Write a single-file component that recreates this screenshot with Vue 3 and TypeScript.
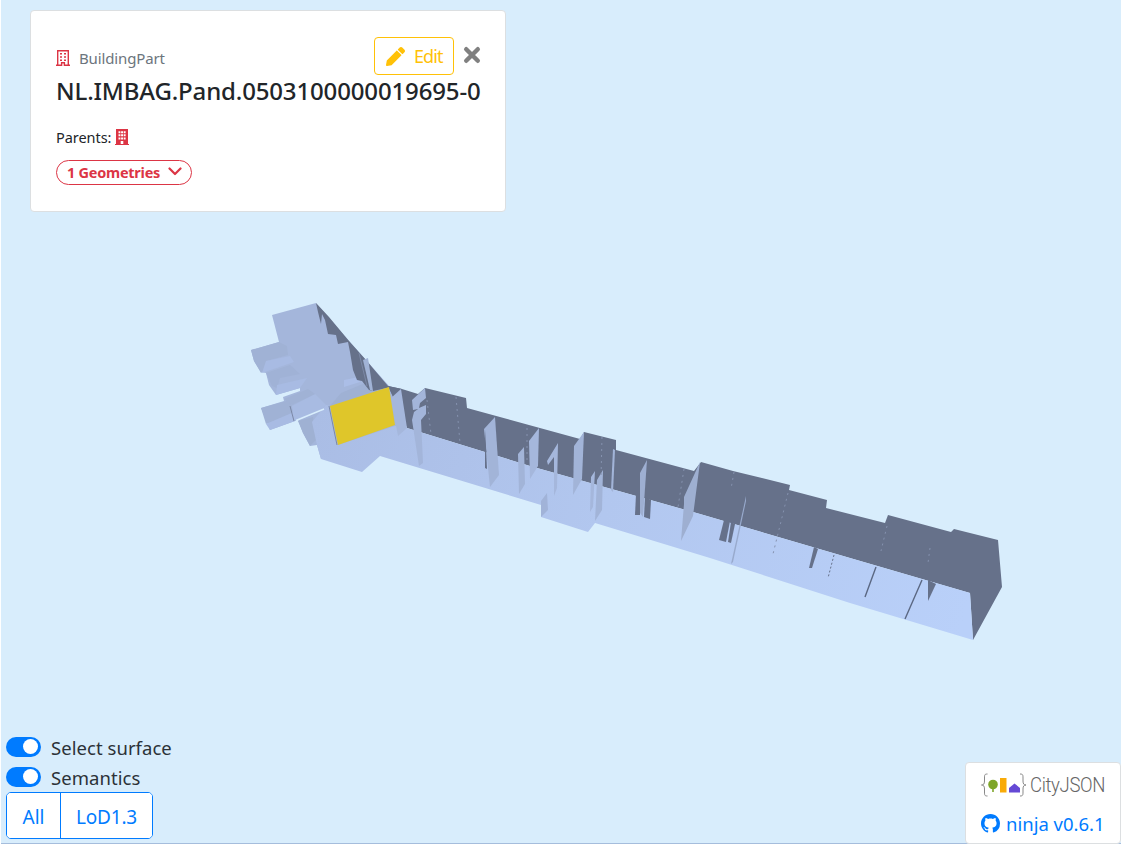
<script setup lang="ts">
import { ref } from 'vue'

interface Shape { points: string; fill: string }

const selectSurface = ref(true)
const semantics = ref(true)

const wall = '#66718a'
const pale = '#a4b6db'

const leftWing: Shape[] = [
  { points: '272,315 316,303 350,342 389,386 404,400 400,434 380,440 330,447 321,459 317,445 310,446 303,433 298,420 324,409 295,421 270,430 261,408 284,401 283,397 300,391 300,388 276,395 269,385 266,373 261,372 254,361 251,350 279,342', fill: pale },
  { points: '251,350 279,342 287,346 288,355 266,361 268,367 261,373 254,361', fill: '#a0b2d5' },
  { points: '266,361 290,356 294,362 262,373', fill: '#a8bbe3' },
  { points: '266,373 290,365 300,374 280,378 277,388 272,386', fill: '#a0b2d6' },
  { points: '277,385 307,378 300,388 276,395', fill: '#a8bbe3' },
  { points: '261,408 290,400 294,413 266,424', fill: '#a0b2d5' },
  { points: '266,424 294,412 295,421 270,430', fill: '#a8bbe3' },
  { points: '292,406 315,394 326,405 322,409 294,421', fill: '#a8bbe2' },
  { points: '284,399 308,389 315,394 292,405', fill: '#a0b2d5' },
  { points: '344,380 359,377 360,382 344,387', fill: '#abbee7' },
  { points: '330,406 341,393 370,381 390,388', fill: '#9fb1d4' },
  { points: '298,421 313,417 316,440 310,446 303,433', fill: '#9fb1d3' },
]

const backWalls: Shape[] = [
  { points: '316,303 329,317 349,341 366,360 388,386 399,390 397,394 394,398 391,387 373,391 369,390 362,381 357,380 353,370 350,352 348,342 338,344 336,335 328,334 325,320 322,314 321,324 318,312', fill: wall },
  { points: '388,386 402,389 418,394 425,388 466,398 467,408 580,439 584,432 616,440 616,450 694,471 701,462 733,471 790,485 789,490 827,500 826,508 885,523 888,515 951,532 954,529 998,540 1002,587 973,640 970,593 850,558 700,514 530,466 407,428', fill: wall },
]

const partitions: Shape[] = [
  { points: '388,386 402,389 394,398', fill: wall },
  { points: '391,398 401,389 407,428 398,436', fill: '#a5b7dc' },
  { points: '412,400 425,388 426,398 420,403 419,408 426,405 426,414 421,420 423,463 419,466 412,420 414,412 418,409 413,410', fill: '#a3b5da' },
  { points: '484,429 495,417 499,475 490,487', fill: '#a2b4d8' },
  { points: '518,454 524,447 525,484 519,494', fill: '#a2b4d8' },
  { points: '529,441 539,428 538,466 530,479', fill: '#a5b7dc' },
  { points: '547,461 558,443 557,488 554,496 554,457 548,465', fill: '#a5b7dc' },
  { points: '574,446 584,432 582,479 573,495', fill: '#a2b4d8' },
  { points: '591,477 595,471 593,507 590,512', fill: '#a5b7dc' },
  { points: '597,480 603,470 602,510 595,521', fill: '#a2b4d8' },
  { points: '613,449 615,450 613,492 611,490', fill: '#a2b4d8' },
  { points: '640,473 647,460 643,517 640,513', fill: '#9eafd2' },
  { points: '684,504 684,497 700,462 693,516 681,541', fill: '#9eafd1' },
  { points: '746,496 746,501 733,562 731,564', fill: '#98aacd' },
  { points: '541,501 547,493 548,510 541,517', fill: '#a1b3d8' },
  { points: '363,360 368,358 373,391 370,390', fill: '#a1b3d6' },
]

const columns: Shape[] = [
  { points: '636,494 640,495 640,515 635,515', fill: wall },
  { points: '645,497 651,500 650,519 644,517', fill: wall },
  { points: '724,520 730,521 726,542 719,540', fill: wall },
  { points: '731,522 735,524 731,543 728,542', fill: wall },
  { points: '814,547 818,549 812,568 809,568', fill: wall },
  { points: '928,580 936,584 928,601', fill: wall },
  { points: '485,430 486,447 487,469 485,468', fill: wall },
]
</script>

<template>
  <main class="viewer">
    <svg class="scene" viewBox="0 0 1121 844" aria-hidden="true">
      <defs>
        <linearGradient id="floor" gradientUnits="userSpaceOnUse" x1="320" y1="400" x2="970" y2="600">
          <stop offset="0" stop-color="#aabde5" />
          <stop offset=".45" stop-color="#b2c7ef" />
          <stop offset="1" stop-color="#b9d0f9" />
        </linearGradient>
      </defs>
      <polygon v-for="s in leftWing" :key="s.points" :points="s.points" :fill="s.fill" />
      <polygon v-for="s in backWalls" :key="s.points" :points="s.points" :fill="s.fill" />
      <path fill="url(#floor)" d="M338 445 395 426 407 428 530 466 700 514 850 558 970 593 973 640 850 603 710 558 595 523 588 532 541 517 541 505 380 456 362 472 321 459 317 445 312 422 326 405 330 406z" />
      <polygon v-for="s in partitions" :key="s.points" :points="s.points" :fill="s.fill" />
      <polygon v-for="s in columns" :key="s.points" :points="s.points" :fill="s.fill" />
      <path d="M330 406 389 387 395 425 338 445z" fill="#dfc62a" />
      <path d="M296 420.500 324 409" stroke="#d8edfc" stroke-width="1.6" />
      <path d="M329 406 337 445M290 406 294 421M359 353 367 386" stroke="#7b88a6" fill="none" />
      <path d="M876 567 865 597M922 580 905 619" stroke="#5b6883" stroke-width="1.4" />
      <path d="M427 400 431 434M456 397 460 443M527 428 527 462M602 437 601 478M684 469 678 507M734 472 731 489M788 493 773 554M887 526 881 551M930 548 928 563" stroke="#8592af" stroke-dasharray="2 4" fill="none" />
      <path d="M834 555 828 578" stroke="#66718a" stroke-dasharray="2 2" />
    </svg>
    <div class="edge"></div>

    <section class="card info">
      <div class="info-head">
        <div class="kind">
          <svg class="building" viewBox="0 0 14 16"><path fill="none" stroke="currentColor" stroke-width="1.4" d="M1.700 15V.8h10.600V15M0 15.200h5.600v-2.400h2.800v2.400H14" /><path fill="currentColor" d="M4 3h2v1.600H4zm4 0h2v1.600H8zM4 6.200h2v1.600H4zm4 0h2v1.600H8zM4 9.400h2V11H4zm4 0h2V11H8z" /></svg>
          <span class="kind-name">BuildingPart</span>
        </div>
        <div class="actions">
          <button class="edit">
            <svg viewBox="0 0 512 512"><path fill="currentColor" d="M498 142l-47 47c-5 5-12 5-17 0L323 78c-5-5-5-12 0-17l47-47c19-19 49-19 68 0l60 60c19 19 19 49 0 68zm-215-41L22 362 0 484c-3 16 12 31 28 28l122-22 261-261c5-5 5-12 0-17L300 101c-5-5-13-5-17 0z" /></svg>
            <span>Edit</span>
          </button>
          <button class="close" aria-label="Close">
            <svg viewBox="0 0 18 18"><path d="M3.200 3.200 14.800 14.800M14.800 3.200 3.200 14.800" stroke="currentColor" stroke-width="4.400" stroke-linecap="round" /></svg>
          </button>
        </div>
      </div>
      <h5 class="title">NL.IMBAG.Pand.0503100000019695-0</h5>
      <div class="parents">
        <span>Parents:</span>
        <svg class="building" viewBox="0 0 14 16"><path fill="currentColor" fill-rule="evenodd" d="M1 0h12v15h1v1H0v-1h1zM3.500 2.200v2h1.900v-2zm2.600 0v2H8v-2zm2.600 0v2h1.900v-2zM3.500 5.300v2h1.900v-2zm2.600 0v2H8v-2zm2.600 0v2h1.900v-2zM3.500 8.400v2h1.900v-2zm2.600 0v2H8v-2zm2.600 0v2h1.900v-2zM5.700 12v3h2.600v-3z" /></svg>
      </div>
      <button class="geometries">
        <span>1 Geometries</span>
        <svg viewBox="0 0 14 9"><path d="M1.500 1.500 7 7 12.500 1.500" fill="none" stroke="currentColor" stroke-width="2.200" stroke-linecap="round" stroke-linejoin="round" /></svg>
      </button>
    </section>

    <section class="controls">
      <label class="toggle"><input v-model="selectSurface" type="checkbox"><i class="track"></i><span>Select surface</span></label>
      <label class="toggle"><input v-model="semantics" type="checkbox"><i class="track"></i><span>Semantics</span></label>
      <div class="lods"><button class="all">All</button><button class="lod">LoD1.3</button></div>
    </section>

    <footer class="card brand">
      <div class="logo">
        <svg viewBox="0 0 46 24">
          <path d="M6.500 1C3.500 1 3.500 2 3.500 5v3c0 3-1 4-3 4 2 0 3 1 3 4v3c0 3 0 4 3 4M39 1c3 0 3 1 3 4v3c0 3 1 4 3 4-2 0-3 1-3 4v3c0 3 0 4-3 4" fill="none" stroke="#888" stroke-width="1" />
          <circle cx="12" cy="11.500" r="4.800" fill="#7fa62b" /><path d="M11.200 14h1.600v5h-1.600z" fill="#7fa62b" />
          <path d="M19 5h6.500v14.500H19z" fill="#f9ab08" />
          <path d="M28 15 33.500 10.500 39 15V19.500H28z" fill="#6549d5" />
        </svg>
        <span class="logo-name">CityJSON</span>
      </div>
      <a class="version">
        <svg viewBox="0 0 16 16"><path fill="currentColor" d="M8 0C3.580 0 0 3.580 0 8c0 3.540 2.290 6.530 5.470 7.590.4.070.55-.17.55-.38 0-.19-.01-.82-.01-1.490-2.010.37-2.530-.49-2.690-.94-.09-.23-.48-.94-.82-1.130-.28-.15-.68-.52-.01-.53.63-.01 1.080.58 1.230.82.72 1.210 1.870.87 2.330.66.07-.52.28-.87.51-1.070-1.780-.2-3.640-.89-3.640-3.950 0-.87.31-1.590.82-2.150-.08-.2-.36-1.020.08-2.120 0 0 .67-.21 2.200.82.64-.18 1.320-.27 2-.27s1.360.09 2 .27c1.530-1.040 2.200-.82 2.200-.82.44 1.100.16 1.920.08 2.120.51.56.82 1.270.82 2.150 0 3.070-1.870 3.750-3.650 3.950.29.25.54.73.54 1.480 0 1.070-.01 1.930-.01 2.200 0 .21.15.46.55.38A8.010 8.010 0 0 0 16 8c0-4.420-3.580-8-8-8z" /></svg>
        <span>ninja v0.6.1</span>
      </a>
    </footer>
  </main>
</template>

<style>
body { margin: 0; overflow: hidden; }
</style>

<style scoped>
* { box-sizing: border-box; }
.viewer { position: relative; width: 1121px; height: 844px; background: #d8edfc; font-family: "Noto Sans", "Open Sans", sans-serif; color: #212529; overflow: hidden; border-left: 1px solid #fff; }
.scene { position: absolute; left: -1px; top: 0; width: 1121px; height: 844px; }
.edge { position: absolute; left: 0; right: 0; bottom: 0; height: 1px; background: #a5bddc; }
button { font: inherit; padding: 0; margin: 0; cursor: pointer; }
svg { display: block; flex: none; }
span { white-space: nowrap; }
.card { position: absolute; background: #fff; border: 1px solid #dcdfe1; border-radius: 4px; }
.info { left: 29px; top: 10px; width: 476px; height: 202px; padding: 26px 24px 26px 25px; }
.info-head { display: flex; justify-content: space-between; height: 38px; }
.kind { display: flex; align-items: center; gap: 9px; height: 38px; padding-top: 4px; color: #6c757d; font-size: 15px; }
.building { width: 14px; height: 16px; color: #dc3545; }
.kind-name { letter-spacing: -.13px; }
.actions { display: flex; gap: 9px; }
.edit { display: flex; align-items: center; gap: 9px; width: 80px; height: 38px; padding-left: 11px; border: 1px solid #ffc107; border-radius: 4px; background: #fff; color: #ffc107; font-size: 18px; letter-spacing: -.9px; }
.edit svg { width: 19px; height: 19px; }
.close { width: 18px; height: 36px; border: 0; background: none; color: #808080; }
.close svg { width: 18px; height: 18px; }
.title { margin: 0; height: 32px; line-height: 32px; font-size: 24px; font-weight: 500; letter-spacing: -.15px; white-space: nowrap; }
.parents { display: flex; align-items: center; gap: 4px; margin-top: 19px; height: 22px; font-size: 14.500px; letter-spacing: -.05px; }
.geometries { display: flex; align-items: center; gap: 8px; height: 25px; width: 136px; margin-top: 12px; padding: 0 0 2px 10px; border: 1px solid #dc3545; border-radius: 13px; background: #fff; color: #dc3545; font-size: 14.500px; font-weight: 700; letter-spacing: -.25px; }
.geometries svg { width: 14px; height: 9px; }
.controls { position: absolute; left: 5px; bottom: 5px; color: #2c3238; }
.toggle { display: flex; align-items: center; height: 30px; gap: 10px; font-size: 18.500px; letter-spacing: .05px; }
.toggle input { position: absolute; opacity: 0; }
.track { width: 35px; height: 20px; border-radius: 10px; background: #adb5bd; display: flex; align-items: center; padding: 0 3px; margin-top: -1px; }
.track::after { content: ""; width: 15px; height: 15px; border-radius: 50%; background: #fff; }
input:checked + .track { background: #007bff; justify-content: flex-end; }
.lods { display: flex; width: 147px; height: 47px; border: 1px solid #007bff; border-radius: 5px; background: #fff; overflow: hidden; }
.lods button { border: 0; background: #fff; color: #007bff; font-size: 19px; padding-top: 2px; }
.lods .all { width: 53px; }
.lods .lod { flex: 1; border-left: 1px solid #007bff; letter-spacing: -.2px; }
.brand { right: 0; bottom: 0; width: 156px; height: 82px; padding: 10px 15px; }
.logo { display: flex; align-items: center; height: 24px; gap: 3px; font-family: Roboto, sans-serif; font-weight: 300; font-size: 20.500px; color: #666; letter-spacing: -.4px; }
.logo svg { width: 46px; height: 24px; }
.logo-name { transform: scaleX(.905); transform-origin: left; }
.version { display: flex; align-items: center; gap: 6px; height: 28px; margin-top: 12px; color: #007bff; font-size: 18.500px; }
.version svg { width: 19px; height: 19px; }
</style>
